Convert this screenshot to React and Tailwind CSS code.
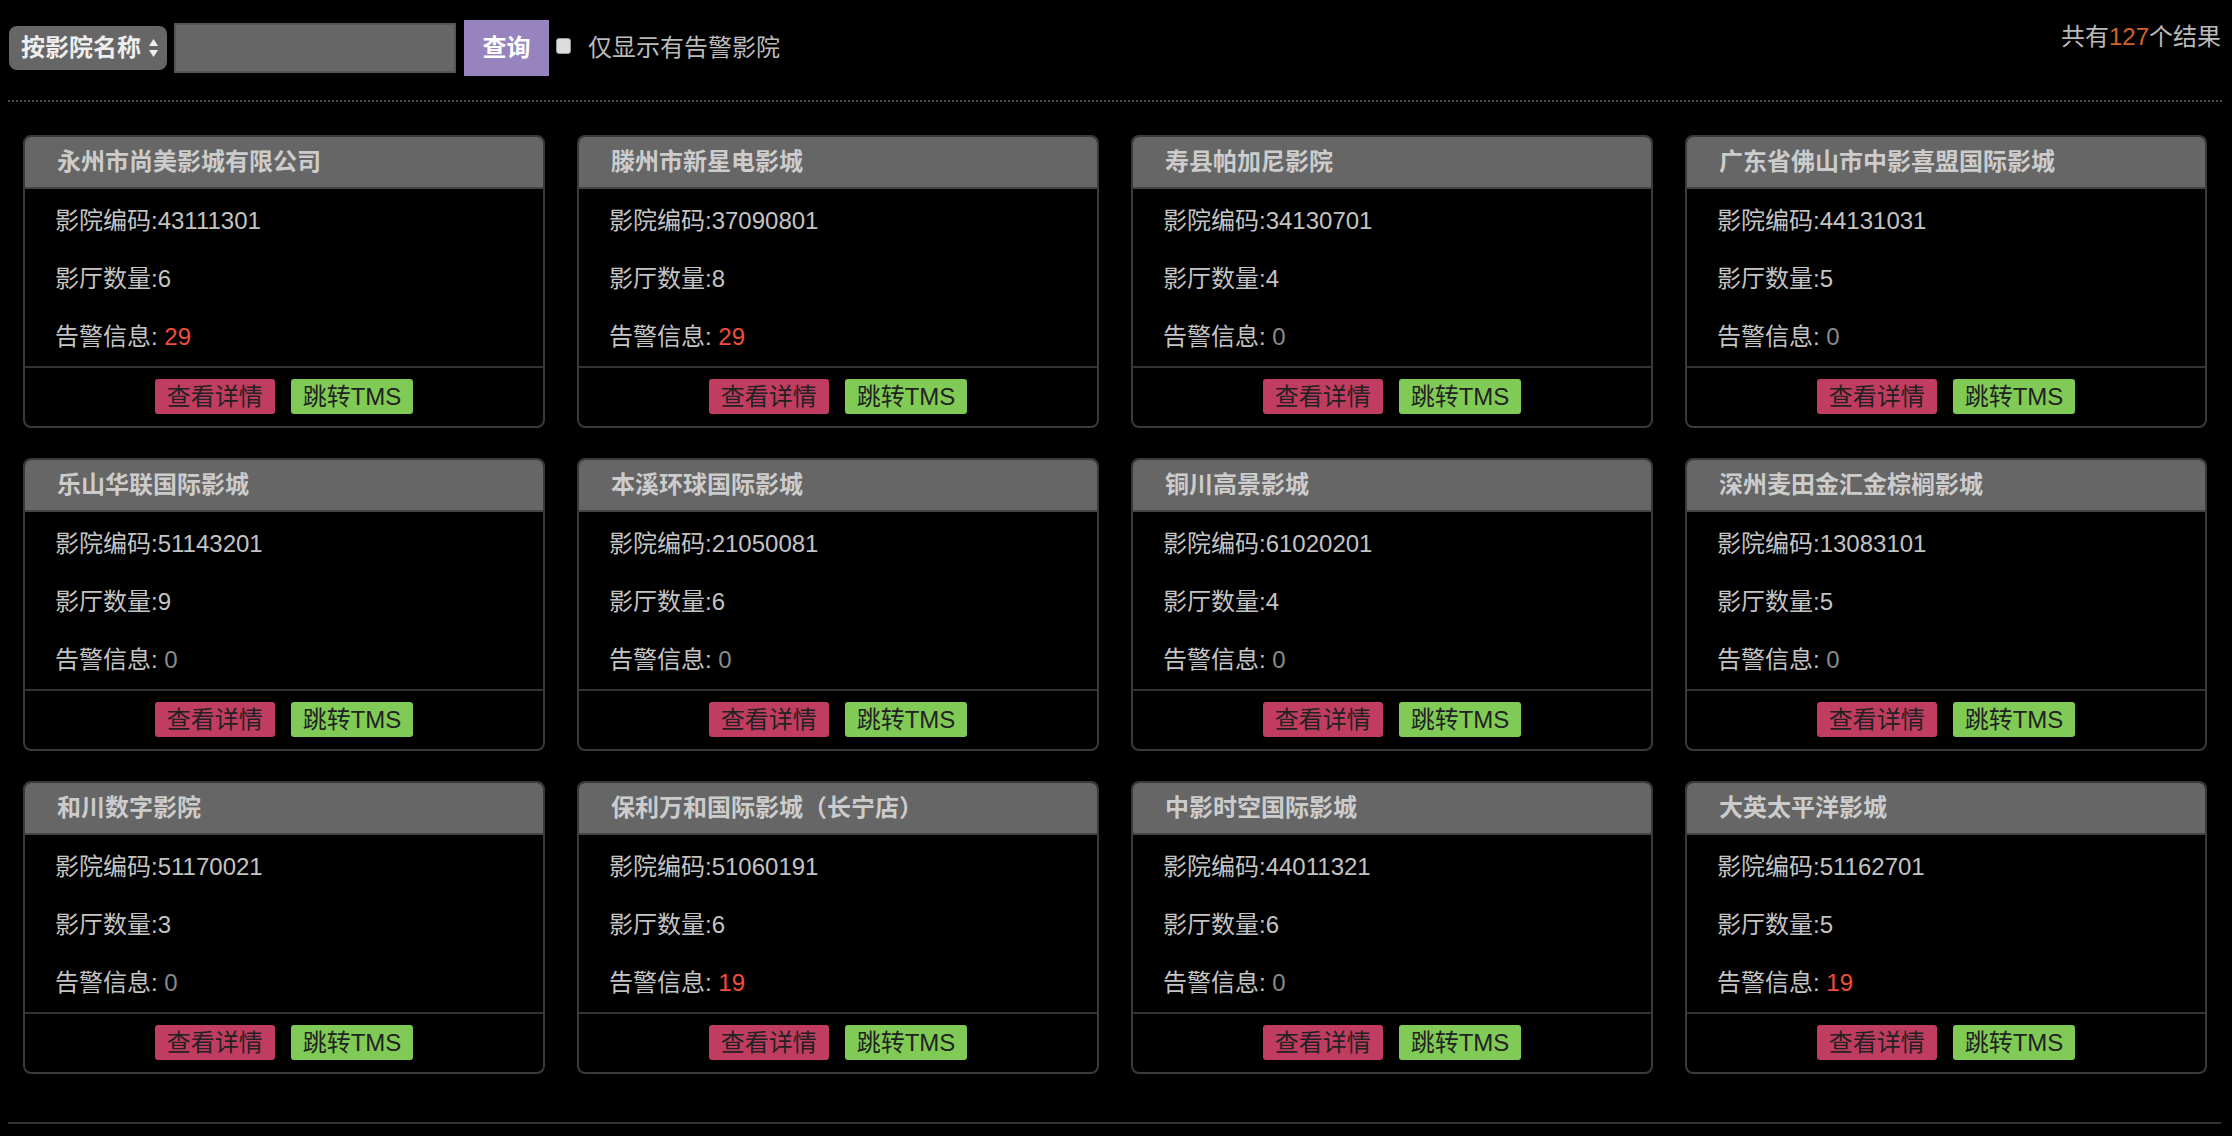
import React from 'react';

const cinemas = [
  { name: '永州市尚美影城有限公司', code: '43111301', halls: 6, alarms: 29 },
  { name: '滕州市新星电影城', code: '37090801', halls: 8, alarms: 29 },
  { name: '寿县帕加尼影院', code: '34130701', halls: 4, alarms: 0 },
  { name: '广东省佛山市中影喜盟国际影城', code: '44131031', halls: 5, alarms: 0 },
  { name: '乐山华联国际影城', code: '51143201', halls: 9, alarms: 0 },
  { name: '本溪环球国际影城', code: '21050081', halls: 6, alarms: 0 },
  { name: '铜川高景影城', code: '61020201', halls: 4, alarms: 0 },
  { name: '深州麦田金汇金棕榈影城', code: '13083101', halls: 5, alarms: 0 },
  { name: '和川数字影院', code: '51170021', halls: 3, alarms: 0 },
  { name: '保利万和国际影城（长宁店）', code: '51060191', halls: 6, alarms: 19 },
  { name: '中影时空国际影城', code: '44011321', halls: 6, alarms: 0 },
  { name: '大英太平洋影城', code: '51162701', halls: 5, alarms: 19 },
];

const font = { fontFamily: '"Liberation Sans", "Noto Sans CJK SC", sans-serif' };

const CinemaCard = ({ cinema }) => (
  <div className="border-2 border-[#3a3a3a] rounded-[8px] overflow-hidden bg-black">
    <div className="h-[52px] bg-[#666666] border-b-2 border-[#444444] pl-[32px] flex items-center text-[24px] font-bold text-[#cccccc]">
      {cinema.name}
    </div>
    <div className="pt-[3px] pl-[30px] text-[24px] text-[#c4c4c4]">
      <div className="h-[58px] flex items-center">影院编码:{cinema.code}</div>
      <div className="h-[58px] flex items-center">影厅数量:{cinema.halls}</div>
      <div className="h-[58px] flex items-center">
        告警信息:&nbsp;
        <span className={cinema.alarms > 0 ? 'text-[#f04d3a]' : 'text-[#8a8a8a]'}>{cinema.alarms}</span>
      </div>
    </div>
    <div className="border-t-2 border-[#333333] pt-[11px] pb-[12px] flex justify-center gap-[16px]">
      <button className="h-[35px] px-[12px] rounded-[3px] bg-[#c03c60] text-[#222222] text-[24px] leading-[35px]">
        查看详情
      </button>
      <button className="h-[35px] px-[12px] rounded-[3px] bg-[#80cb56] text-[#222222] text-[24px] leading-[35px]">
        跳转TMS
      </button>
    </div>
  </div>
);

export default function App() {
  return (
    <div className="min-h-screen w-[2232px] bg-black pb-[12px]" style={font}>
      <div className="flex justify-between items-start pt-[20px] pl-[9px] pr-[11px]">
        <div className="flex items-center h-[56px]">
          <div className="w-[158px] h-[44px] rounded-[8px] bg-[#666666] flex items-center pl-[12px] pr-[8px] justify-between">
            <span className="text-[24px] font-bold text-[#eeeeee]">按影院名称</span>
            <svg width="11" height="20" viewBox="0 0 11 20">
              <path d="M5.5 1 L10 8 L1 8 Z" fill="#eeeeee" />
              <path d="M5.5 19 L10 12 L1 12 Z" fill="#eeeeee" />
            </svg>
          </div>
          <input
            type="text"
            className="ml-[7px] w-[282px] h-[50px] bg-[#666666] border-2 border-[#555555] outline-none text-white text-[22px] px-2"
          />
          <button className="ml-[8px] w-[85px] h-[56px] bg-[#9784bf] text-white text-[24px] font-bold">
            查询
          </button>
          <span className="ml-[7px] w-[15px] h-[16px] rounded-[3px] bg-[#dddddd] border border-[#999999] -mt-[4px]" />
          <span className="ml-[17px] text-[24px] text-[#bbbbbb]">仅显示有告警影院</span>
        </div>
        <div className="mt-[3px] text-[24px] leading-[28px] text-[#bbbbbb]">
          共有<span className="text-[#d2642a]">127</span>个结果
        </div>
      </div>

      <div className="mt-[24px] mx-[8px] mr-[10px] border-t-2 border-dotted border-[#4a4a4a]" />

      <div className="mt-[33px] pl-[23px] pr-[25px] grid grid-cols-4 gap-x-[32px] gap-y-[30px]">
        {cinemas.map((c) => (
          <CinemaCard key={c.code} cinema={c} />
        ))}
      </div>

      <div className="mt-[48px] ml-[8px] mr-[11px] border-t-2 border-[#333333]" />
    </div>
  );
}
